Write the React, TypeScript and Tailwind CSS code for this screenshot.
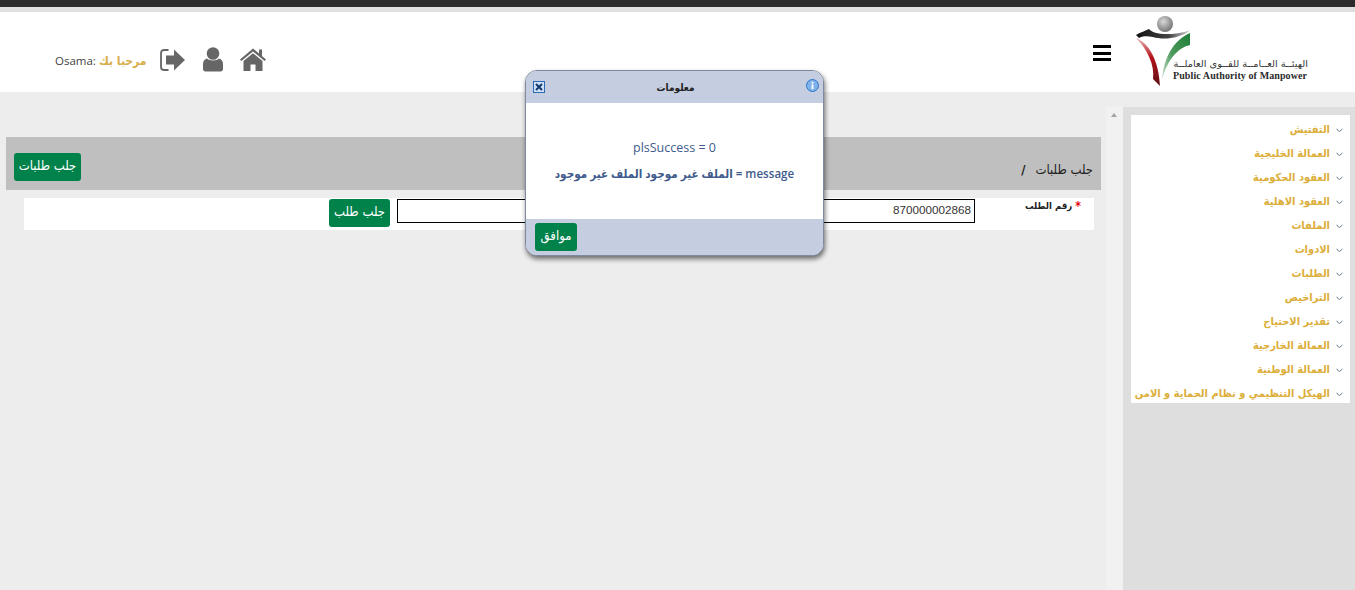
import React from 'react';

const menuItems = [
  'التفتيش',
  'العمالة الخليجية',
  'العقود الحكومية',
  'العقود الاهلية',
  'الملفات',
  'الادوات',
  'الطلبات',
  'التراخيص',
  'تقدير الاحتياج',
  'العمالة الخارجية',
  'العمالة الوطنية',
  'الهيكل التنظيمي و نظام الحماية و الامن',
];

const arabicFont = "font-['DejaVu_Sans_Condensed','DejaVu_Sans',sans-serif]";

function Logo() {
  return (
    <svg width="175" height="72" viewBox="0 0 175 72" className="block">
      <defs>
        <radialGradient id="ball" cx="40%" cy="35%" r="70%">
          <stop offset="0%" stopColor="#d8d8d8" />
          <stop offset="100%" stopColor="#6f6f6f" />
        </radialGradient>
        <linearGradient id="black" x1="0" x2="1" y1="0" y2="0">
          <stop offset="0%" stopColor="#111" />
          <stop offset="60%" stopColor="#444" />
          <stop offset="100%" stopColor="#ddd" />
        </linearGradient>
        <linearGradient id="red" x1="0" x2="0" y1="0" y2="1">
          <stop offset="0%" stopColor="#e8b8b8" />
          <stop offset="40%" stopColor="#b5121b" />
          <stop offset="100%" stopColor="#5e1114" />
        </linearGradient>
        <linearGradient id="green" x1="1" x2="0" y1="0" y2="1">
          <stop offset="0%" stopColor="#1c7d35" />
          <stop offset="55%" stopColor="#4f9a5e" />
          <stop offset="100%" stopColor="#d5e4d8" />
        </linearGradient>
      </defs>
      <circle cx="30" cy="9" r="8" fill="url(#ball)" />
      <path d="M1 20 C6 17 10 16 14 14 C18 19 34 22 56 15 C44 24 28 25 18 22 C12 21 7 21 4 23 Z" fill="url(#black)" />
      <path d="M1 23 C14 28 24 46 25 71 L18 64 C20 50 12 34 1 23 Z" fill="url(#red)" />
      <path d="M55 18 L55 30 C42 33 32 46 27 65 C29 42 38 26 55 18 Z" fill="url(#green)" />
      <text x="173" y="52" fontFamily="DejaVu Sans, sans-serif" fontSize="9.8" fill="#333" direction="rtl">
        الهيئــة العــامــة للقــوى العاملــة
      </text>
      <text x="38" y="64" fontFamily="Liberation Serif, serif" fontWeight="700" fontSize="10" fill="#2b2b2b" textLength="134">
        Public Authority of Manpower
      </text>
    </svg>
  );
}

function HomeIcon() {
  return (
    <svg width="26" height="24" viewBox="0 0 26 24" fill="#666">
      <path d="M13 0.5 L19 5.5 V1.5 H22 V8 L26 11.5 L24.6 13 L13 3.4 L1.4 13 L0 11.5 Z" />
      <path d="M13 5.2 L22.5 13 V23 H15.5 V16.5 H10.5 V23 H3.5 V13 Z" />
    </svg>
  );
}

function UserIcon() {
  return (
    <svg width="20" height="25" viewBox="0 0 20 25" fill="#666">
      <circle cx="10" cy="6.5" r="6.3" />
      <path d="M4 11.5 C6 14 14 14 16 11.5 C18.6 12.2 20 14.4 20 17 V22 C20 23.6 19 24.5 17.5 24.5 H2.5 C1 24.5 0 23.6 0 22 V17 C0 14.4 1.4 12.2 4 11.5 Z" />
    </svg>
  );
}

function SignOutIcon() {
  return (
    <svg width="25" height="22" viewBox="0 0 25 22" fill="#666">
      <path d="M8.5 1 H4 C2 1 1 2.2 1 4 V18 C1 19.8 2 21 4 21 H8.5" fill="none" stroke="#666" strokeWidth="1.8" />
      <path d="M14 0.5 L25 11 L14 21.5 V15.5 H6 V6.5 H14 Z" />
    </svg>
  );
}

function GreenButton({ label, className = '' }: { label: string; className?: string }) {
  return (
    <button className={`h-[28px] shrink-0 whitespace-nowrap rounded-[3px] bg-[#00824a] pb-[3px] text-[13px] leading-[22px] text-white ${arabicFont} ${className}`}>
      {label}
    </button>
  );
}

export default function App() {
  return (
    <div className="relative flex h-screen flex-col overflow-hidden bg-[#ededed]">
      {/* Top strips */}
      <div className="h-[7px] bg-[#2b2b2b]" />
      <div className="h-[5px] bg-[#e0e0e0]" />

      {/* Header */}
      <header className="flex h-[80px] items-start justify-between bg-white pl-[55px] pr-[45px]">
        <div className="flex items-center pt-[35px]">
          <span className="mt-[3px] w-[89px] whitespace-nowrap text-[12px]">
            <span className="font-['Open_Sans',sans-serif] text-[11.5px] text-[#444]">Osama:</span>{' '}
            <span className={`font-bold text-[#d9ae4c] ${arabicFont}`}>مرحبا بك</span>
          </span>
          <div className="ml-[16px] flex items-center">
            <SignOutIcon />
            <div className="ml-[18px]">
              <UserIcon />
            </div>
            <div className="ml-[17px]">
              <HomeIcon />
            </div>
          </div>
        </div>
        <div className="flex items-start pt-[3px]">
          <div className="mr-[24px] mt-[30px] flex w-[18px] flex-col gap-[3.5px]">
            <div className="h-[3px] bg-black" />
            <div className="h-[3px] bg-black" />
            <div className="h-[3px] bg-black" />
          </div>
          <Logo />
        </div>
      </header>

      {/* Body */}
      <div className="flex flex-1">
        <main className="w-[1106px] shrink-0 pl-[6px] pr-[5px] pt-[45px]">
          <div className="flex h-[53px] items-start justify-between bg-[#bfbfbf] px-[8px] pt-[16px]">
            <GreenButton label="جلب طلبات" className="w-[67px]" />
            <div className={`flex items-center gap-[10px] pt-[9px] text-[13px] leading-[16px] text-[#222] ${arabicFont}`}>
              <span className="font-bold">/</span>
              <span>جلب طلبات</span>
            </div>
          </div>

          <div className="ml-[18px] mr-[7px] mt-[8px] flex h-[32px] items-start bg-white pl-[305px] pt-[1px]">
            <GreenButton label="جلب طلب" className="w-[61px]" />
            <input
              readOnly
              value="870000002868"
              className="ml-[7px] h-[24px] w-[578px] border border-black bg-white px-[3px] pb-[3px] text-right font-['Liberation_Sans',sans-serif] text-[11.7px] text-[#333]"
            />
            <div className={`ml-[50px] flex items-start gap-[3px] whitespace-nowrap text-[9.5px] font-bold leading-[14px] text-[#222] ${arabicFont}`}>
              <span>رقم الطلب</span>
              <span className="text-[12px] text-red-600">*</span>
            </div>
          </div>
        </main>

        {/* Scroll strip and side menu */}
        <div className="mt-[15px] w-[17px] shrink-0 bg-[#f1f1f1] pl-[5px] pt-[6px]">
          <div className="h-0 w-0 border-x-[3.5px] border-b-[4px] border-x-transparent border-b-[#a3a3a3]" />
        </div>
        <aside className="mt-[15px] w-[232px] shrink-0 bg-[#dedede] pl-[8px] pr-[5px] pt-[8px]">
          <ul dir="rtl" className="h-[288px] bg-white pt-[3px]">
            {menuItems.map((item) => (
              <li key={item} className="flex h-[24px] items-center pr-[7px]">
                <svg width="7" height="5" viewBox="0 0 7 5" className="shrink-0">
                  <path d="M0.5 0.8 L3.5 3.8 L6.5 0.8" fill="none" stroke="#5f7286" strokeWidth="1" />
                </svg>
                <span className={`mr-[6px] whitespace-nowrap text-[11px] font-bold text-[#dcae3a] ${arabicFont}`}>{item}</span>
              </li>
            ))}
          </ul>
        </aside>
      </div>

      {/* Info dialog */}
      <div className="absolute left-[525px] top-[70px] flex h-[186px] w-[299px] flex-col overflow-hidden rounded-[12px] border border-[#7f8aa0] bg-white shadow-[1px_3px_5px_rgba(0,0,0,0.55)]">
        <div className="flex h-[32px] items-center justify-between bg-[#c5cee1] pl-[7px] pr-[4px]">
          <svg width="12" height="12" viewBox="0 0 12 12">
            <rect x="0.5" y="0.5" width="11" height="11" fill="#cfe0f5" stroke="#2d6cb5" />
            <path d="M3 3 L9 9 M9 3 L3 9" stroke="#123a70" strokeWidth="2" />
          </svg>
          <span className={`text-[10px] font-bold text-[#222] ${arabicFont}`}>معلومات</span>
          <svg width="13" height="13" viewBox="0 0 13 13" className="-mt-[4px]">
            <circle cx="6.5" cy="6.5" r="6" fill="#7fb2ea" stroke="#2f74c8" />
            <rect x="5.6" y="5.4" width="1.8" height="4.8" fill="#fff" />
            <rect x="5.6" y="2.8" width="1.8" height="1.8" fill="#fff" />
          </svg>
        </div>
        <div className="flex flex-1 flex-col items-center pt-[35px] text-[#3f5b8c]">
          <p className="font-['Open_Sans',sans-serif] text-[12.5px] leading-[20px]">plsSuccess = 0</p>
          <p dir="rtl" className="mt-[6px] whitespace-nowrap font-['Open_Sans','DejaVu_Sans_Condensed','DejaVu_Sans',sans-serif] text-[11.6px] font-semibold leading-[20px]">
            message = الملف غير موجود الملف غير موجود
          </p>
        </div>
        <div className="flex h-[36px] items-start bg-[#c5cee1] pl-[9px] pt-[4px]">
          <GreenButton label="موافق" className="w-[42px]" />
        </div>
      </div>
    </div>
  );
}
